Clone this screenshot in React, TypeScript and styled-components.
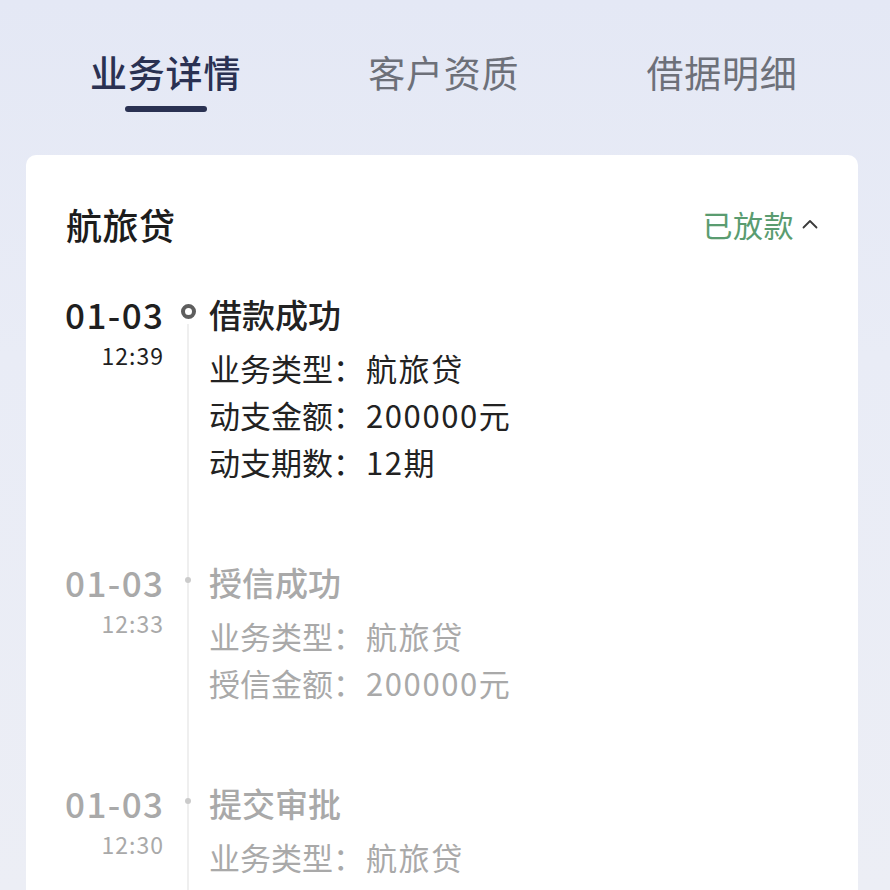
import React from "react";
import styled, { createGlobalStyle } from "styled-components";

const Global = createGlobalStyle`
  html, body { margin: 0; padding: 0; }
  body {
    width: 890px;
    height: 890px;
    overflow: hidden;
    background: linear-gradient(180deg, #e4e8f5 0%, #e9ecf6 40%, #eceef5 100%);
    font-family: "Noto Sans CJK SC", "Noto Sans", sans-serif;
  }
`;

const Page = styled.div`
  display: flex;
  flex-direction: column;
  height: 890px;
  overflow: hidden;
`;

const Tabs = styled.div`
  display: flex;
  gap: 127px;
  padding: 50px 0 0 90px;
`;

const Tab = styled.div<{ $active?: boolean }>`
  display: flex;
  flex-direction: column;
  align-items: center;
  font-size: 37px;
  line-height: 44px;
  font-weight: ${(p) => (p.$active ? 500 : 400)};
  color: ${(p) => (p.$active ? "#2a3152" : "#6d7079")};
  letter-spacing: 0.8px;
`;

const Indicator = styled.div`
  width: 82px;
  height: 6px;
  border-radius: 3px;
  margin-top: 12px;
  background: #2a3152;
`;

const Card = styled.div`
  margin: 43px 32px 0 26px;
  flex: 1;
  background: #fff;
  border-radius: 10px 10px 0 0;
  padding: 49px 40px 0 40px;
`;

const Header = styled.div`
  display: flex;
  align-items: center;
  justify-content: space-between;
  height: 40px;
  margin-bottom: 50px;
`;

const Product = styled.div`
  font-size: 36px;
  font-weight: 500;
  color: #1c1c1c;
  letter-spacing: 0.5px;
`;

const Status = styled.div`
  display: flex;
  align-items: center;
  gap: 8px;
  font-size: 30px;
  color: #5a9c70;
  letter-spacing: 0.5px;
`;

const Entry = styled.div`
  display: flex;
`;

const TimeCol = styled.div<{ $muted?: boolean }>`
  width: 97px;
  flex-shrink: 0;
  display: flex;
  flex-direction: column;
  align-items: flex-end;
  white-space: nowrap;
  color: ${(p) => (p.$muted ? "#a9a9a9" : "#1f1f1f")};
`;

const DateText = styled.div`
  font-size: 35px;
  line-height: 40px;
  font-weight: 500;
  letter-spacing: 1.4px;
  margin-right: -1.4px;
  white-space: nowrap;
`;

const TimeText = styled.div`
  font-size: 23px;
  line-height: 32px;
  margin-top: 5px;
  letter-spacing: 1px;
  margin-right: -1px;
  white-space: nowrap;
`;

const Axis = styled.div<{ $first?: boolean }>`
  position: relative;
  width: 46px;
  flex-shrink: 0;
  &::before {
    content: "";
    position: absolute;
    left: 24px;
    width: 2px;
    top: ${(p) => (p.$first ? "30px" : "0")};
    bottom: 0;
    background: #efefef;
  }
`;

const Dot = styled.div<{ $active?: boolean }>`
  position: absolute;
  z-index: 1;
  box-sizing: border-box;
  border-radius: 50%;
  ${(p) =>
    p.$active
      ? `left: 17.5px; top: 10px; width: 15px; height: 15px; border: 4px solid #5e5e5e; background: #fff;`
      : `left: 22px; top: 15px; width: 6px; height: 6px; background: #cbcbcb;`}
`;

const Body = styled.div<{ $muted?: boolean }>`
  flex: 1;
  padding-bottom: 77px;
  color: ${(p) => (p.$muted ? "#a9a9a9" : "#222")};
`;

const Title = styled.div`
  font-size: 33px;
  line-height: 40px;
  font-weight: 500;
  margin-bottom: 10px;
`;

const Detail = styled.div`
  display: flex;
  font-size: 31px;
  line-height: 47px;
`;

const Label = styled.span`
  width: 157px;
`;

const Value = styled.span`
  letter-spacing: 1.6px;
`;

const Chevron = () => (
  <svg width="16" height="10" viewBox="0 0 16 10" fill="none">
    <path d="M1.5 8.5 L8 2 L14.5 8.5" stroke="#3a3a3a" strokeWidth="1.8" strokeLinecap="round" strokeLinejoin="round" />
  </svg>
);

type Item = {
  date: string;
  time: string;
  title: string;
  details: [string, string][];
};

const items: Item[] = [
  {
    date: "01-03",
    time: "12:39",
    title: "借款成功",
    details: [
      ["业务类型：", "航旅贷"],
      ["动支金额：", "200000元"],
      ["动支期数：", "12期"],
    ],
  },
  {
    date: "01-03",
    time: "12:33",
    title: "授信成功",
    details: [
      ["业务类型：", "航旅贷"],
      ["授信金额：", "200000元"],
    ],
  },
  {
    date: "01-03",
    time: "12:30",
    title: "提交审批",
    details: [["业务类型：", "航旅贷"]],
  },
];

export default function App() {
  return (
    <Page>
      <Global />
      <Tabs>
        <Tab $active>
          业务详情
          <Indicator />
        </Tab>
        <Tab>客户资质</Tab>
        <Tab>借据明细</Tab>
      </Tabs>
      <Card>
        <Header>
          <Product>航旅贷</Product>
          <Status>
            已放款
            <Chevron />
          </Status>
        </Header>
        {items.map((it, i) => {
          const muted = i > 0;
          return (
            <Entry key={i}>
              <TimeCol $muted={muted}>
                <DateText>{it.date}</DateText>
                <TimeText>{it.time}</TimeText>
              </TimeCol>
              <Axis $first={i === 0}>
                <Dot $active={!muted} />
              </Axis>
              <Body $muted={muted}>
                <Title>{it.title}</Title>
                {it.details.map(([l, v], j) => (
                  <Detail key={j}>
                    <Label>{l}</Label>
                    <Value>{v}</Value>
                  </Detail>
                ))}
              </Body>
            </Entry>
          );
        })}
      </Card>
    </Page>
  );
}
